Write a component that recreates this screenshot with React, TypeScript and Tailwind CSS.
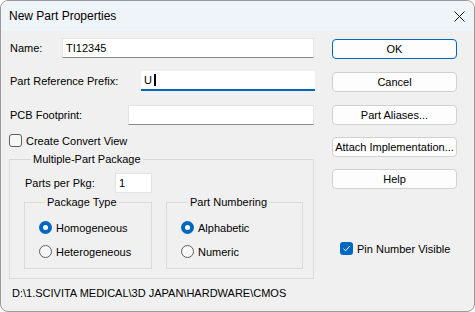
import type { ReactNode } from 'react'

function TextBox({
  value,
  className,
  focused,
}: {
  value?: string
  className: string
  focused?: boolean
}) {
  return (
    <div
      className={`flex h-[20px] items-center bg-white pl-[3px] text-[11px] ${
        focused
          ? 'border-b-2 border-[#0067c0]'
          : 'border border-[#e3e3e3] border-b-[#8a8a8a]'
      } ${className}`}
    >
      {value}
      {focused && <span className="ml-[2px] inline-block h-[12px] w-[2px] bg-black" />}
    </div>
  )
}

function Button({ children, primary }: { children: ReactNode; primary?: boolean }) {
  return (
    <div
      className={`flex h-[20px] w-[125px] items-center justify-center rounded-[4px] border bg-[#fdfdfd] text-[11px] ${
        primary ? 'border-[#0067c0]' : 'border-[#d0d0d0]'
      }`}
    >
      {children}
    </div>
  )
}

function Radio({ label, checked }: { label: string; checked?: boolean }) {
  return (
    <div className="flex h-[13px] items-center gap-[4px]">
      {checked ? (
        <span className="flex h-[13px] w-[13px] items-center justify-center rounded-full bg-[#0067c0]">
          <span className="h-[5px] w-[5px] rounded-full bg-white" />
        </span>
      ) : (
        <span className="h-[13px] w-[13px] rounded-full border border-[#5f5f5f] bg-[#f7f7f7]" />
      )}
      <span>{label}</span>
    </div>
  )
}

function Checkbox({ label, checked }: { label: string; checked?: boolean }) {
  return (
    <div className="flex h-[13px] items-center gap-[4px]">
      {checked ? (
        <span className="flex h-[13px] w-[13px] items-center justify-center rounded-[3px] bg-[#0067c0]">
          <svg width="9" height="9" viewBox="0 0 9 9" fill="none">
            <path d="M1.5 4.8 L3.6 6.8 L7.6 2.2" stroke="white" strokeWidth="1" />
          </svg>
        </span>
      ) : (
        <span className="h-[13px] w-[13px] rounded-[3px] border border-[#5f5f5f] bg-[#f7f7f7]" />
      )}
      <span>{label}</span>
    </div>
  )
}

export default function App() {
  return (
    <div className="flex h-[312px] w-[475px] flex-col overflow-hidden rounded-[8px] border border-[#9a9a9a] bg-[#f0f0f0] font-['Liberation_Sans',Arial,sans-serif] text-[11px] leading-[14px] text-black">
      {/* title bar */}
      <div className="flex h-[30px] shrink-0 items-center justify-between bg-[#eff4f9] pl-[8px] pr-[9px]">
        <span className="text-[12px]">New Part Properties</span>
        <svg width="11" height="11" viewBox="0 0 11 11">
          <path d="M0.5 0.5 L10.5 10.5 M10.5 0.5 L0.5 10.5" stroke="#1b1b1b" strokeWidth="1" />
        </svg>
      </div>

      <div className="flex pl-[8px]">
        {/* left column */}
        <div className="flex w-[306px] flex-col">
          <div className="mt-[7px] flex items-center">
            <span className="w-[53px] pl-[1px]">Name:</span>
            <TextBox value="TI12345" className="w-[252px]" />
          </div>
          <div className="mt-[13px] flex items-center">
            <span className="w-[132px] pl-[1px]">Part Reference Prefix:</span>
            <TextBox value="U" focused className="w-[174px]" />
          </div>
          <div className="mt-[14px] flex items-center">
            <span className="w-[119px] pl-[1px]">PCB Footprint:</span>
            <TextBox className="w-[186px]" />
          </div>
          <div className="mt-[9px]">
            <Checkbox label="Create Convert View" />
          </div>

          <fieldset className="mt-[5px] h-[127px] w-[305px] border border-[#dadada] pl-[14px]">
            <legend className="ml-[7px] px-[2px] leading-[14px]">Multiple-Part Package</legend>
            <div className="mt-[7px] flex items-center pl-[1px]">
              <span className="w-[90px]">Parts per Pkg:</span>
              <TextBox value="1" className="h-[19px] w-[37px] border-b-[#e3e3e3]" />
            </div>
            <div className="mt-[2px] flex gap-[14px]">
              <fieldset className="h-[74px] w-[128px] border border-[#dadada] pl-[14px]">
                <legend className="ml-[6px] px-[2px] leading-[14px]">Package Type</legend>
                <div className="mt-[12px] flex flex-col gap-[11px]">
                  <Radio label="Homogeneous" checked />
                  <Radio label="Heterogeneous" />
                </div>
              </fieldset>
              <fieldset className="h-[74px] w-[137px] border border-[#dadada] pl-[14px]">
                <legend className="ml-[7px] px-[2px] leading-[14px]">Part Numbering</legend>
                <div className="mt-[12px] flex flex-col gap-[11px]">
                  <Radio label="Alphabetic" checked />
                  <Radio label="Numeric" />
                </div>
              </fieldset>
            </div>
          </fieldset>

          <div className="mt-[7px] pl-[3px]">D:\1.SCIVITA MEDICAL\3D JAPAN\HARDWARE\CMOS</div>
        </div>

        {/* right column */}
        <div className="ml-[17px] flex w-[125px] flex-col">
          <div className="mt-[8px]">
            <Button primary>OK</Button>
          </div>
          <div className="mt-[13px]">
            <Button>Cancel</Button>
          </div>
          <div className="mt-[13px]">
            <Button>Part Aliases...</Button>
          </div>
          <div className="mt-[12px]">
            <Button>Attach Implementation...</Button>
          </div>
          <div className="mt-[12px]">
            <Button>Help</Button>
          </div>
          <div className="ml-[8px] mt-[53px]">
            <Checkbox label="Pin Number Visible" checked />
          </div>
        </div>
      </div>
    </div>
  )
}
